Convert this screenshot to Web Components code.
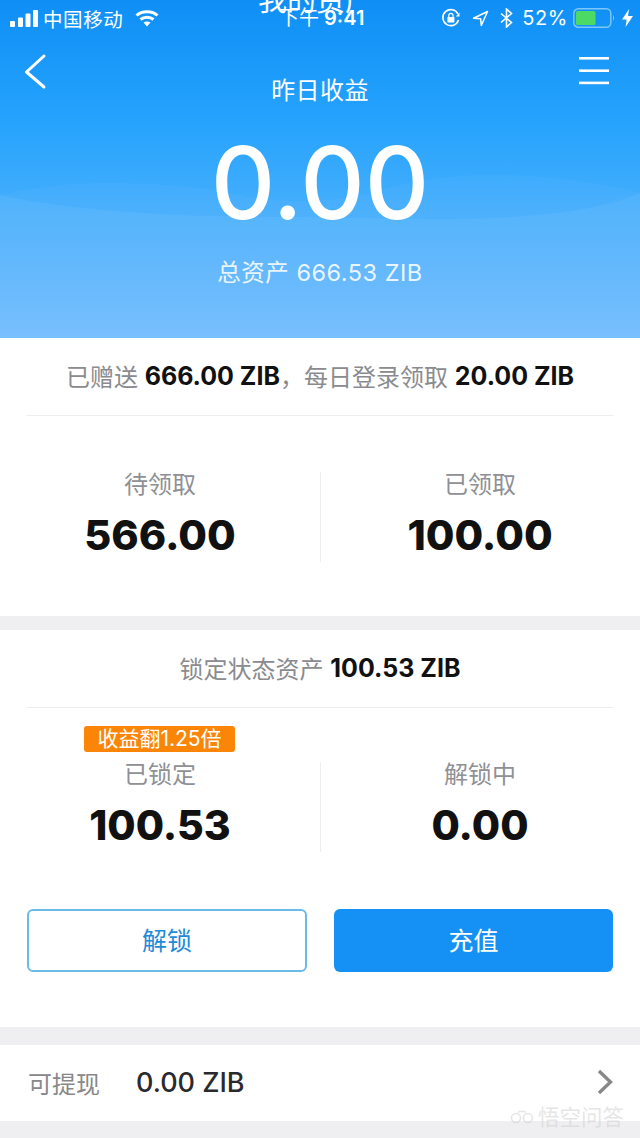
<!DOCTYPE html>
<html lang="zh">
<head>
<meta charset="utf-8">
<title>我的资产</title>
<style>
  html, body { margin: 0; padding: 0; background: #efeff1; }
  body { width: 640px; height: 1138px; overflow: hidden; font-family: Inter, "Noto Sans CJK SC", sans-serif; }
</style>
</head>
<body>
<asset-page>
  <asset-header></asset-header>
  <asset-card style="--card-height:278px">
    <gift-line><span>已赠送 </span><b>666.00 ZIB</b><span>，每日登录领取 </span><b>20.00 ZIB</b></gift-line>
    <stat-pair>
      <stat-cell slot="left" label="待领取" value="566.00" big></stat-cell>
      <stat-cell slot="right" label="已领取" value="100.00" big></stat-cell>
    </stat-pair>
  </asset-card>
  <asset-card style="--card-height:397px;--card-top:14px">
    <gift-line small><span>锁定状态资产 </span><b>100.53 ZIB</b></gift-line>
    <stat-pair small>
      <stat-cell slot="left" label="已锁定" value="100.53" badge="收益翻1.25倍"></stat-cell>
      <stat-cell slot="right" label="解锁中" value="0.00"></stat-cell>
    </stat-pair>
    <action-buttons></action-buttons>
  </asset-card>
  <withdraw-row></withdraw-row>
</asset-page>

<script>
class AssetPage extends HTMLElement {
  connectedCallback() {
    this.attachShadow({ mode: 'open' });
    this.shadowRoot.innerHTML = `
      <style>
        :host { display: flex; flex-direction: column; width: 640px; height: 1138px; overflow: hidden; position: relative; }
      </style>
      <slot></slot>
    `;
  }
}

class AssetHeader extends HTMLElement {
  connectedCallback() {
    this.attachShadow({ mode: 'open' });
    this.shadowRoot.innerHTML = `
      <style>
        :host {
          display: flex; flex-direction: column; align-items: center;
          height: 338px; flex: none; position: relative; overflow: hidden; color: #fff;
          background: linear-gradient(180deg, #0f8ff6 0%, #25a3fd 36%, #45aefc 62%, #6cbafd 100%);
          font-family: Inter, "Noto Sans CJK SC", sans-serif;
        }
        .waves { position: absolute; left: 0; top: 0; width: 640px; height: 338px; }
        .status {
          position: relative; width: 100%; height: 36px; flex: none; display: flex; align-items: center;
          font-size: 20px; padding: 0 7px 0 10px; box-sizing: border-box;
        }
        .status .left, .status .right { display: flex; align-items: center; }
        .status .left { gap: 6px; }
        .status .right { margin-left: auto; }
        .carrier { font-size: 19.5px; letter-spacing: 0.6px; margin: 0 6px 0 -1px; }
        .clock { position: absolute; left: 279px; top: 4px; font-size: 20px; line-height: 28px; font-weight: 600; white-space: nowrap; }
        .clock small { font-size: 20px; font-weight: 400; }
        .over-title { position: absolute; left: 258px; top: -15px; font-size: 29px; line-height: 32px; white-space: nowrap; }
        .pct { font-size: 20px; margin: 0 5px 0 9px; letter-spacing: .6px; }
        .nav { position: relative; width: 100%; height: 0; }
        .back { position: absolute; left: 24px; top: 17px; }
        .menu { position: absolute; left: 579px; top: 21px; }
        .caption { position: relative; margin-top: 38px; font-size: 24px; line-height: 34px; letter-spacing: .4px; }
        .amount { position: relative; margin-top: 23px; font-size: 100px; line-height: 104px; font-weight: 500; }
        .total { position: relative; margin-top: 22px; font-size: 23.5px; line-height: 32px; opacity: .86; letter-spacing: .5px; }
      </style>
      <svg class="waves" viewBox="0 0 640 338">
        <path d="M0 195C40 187 70 183 105 183C140 183 180 185 215 190C270 204 330 206 388 188C420 180 450 175 490 175C550 175 600 183 640 193V338H0Z" fill="#fff" opacity=".035"/>
        <path d="M0 195C60 208 150 217 285 217C370 217 440 222 510 217C570 214 610 205 640 193V338H0Z" fill="#fff" opacity=".05"/>
      </svg>
      <div class="status">
        <div class="left">
          <svg width="28" height="17" viewBox="0 0 28 17" fill="#fff">
            <rect x="0" y="11" width="5" height="6" rx="1"/><rect x="8" y="7.5" width="5" height="9.5" rx="1"/>
            <rect x="15.5" y="3.5" width="5" height="13.5" rx="1"/><rect x="23" y="0" width="5" height="17" rx="1"/>
          </svg>
          <span class="carrier">中国移动</span>
          <svg width="24" height="18" viewBox="0 0 24 18" fill="none" stroke="#fff" stroke-width="3">
            <path d="M1.5 6.5C7 1.5 17 1.5 22.5 6.5"/><path d="M5.5 10.5C9 7.5 15 7.5 18.5 10.5"/>
            <path d="M12 17.5L8.5 13.6C10.5 12.2 13.5 12.2 15.5 13.6Z" fill="#fff" stroke="none"/>
          </svg>
        </div>
        <span class="over-title">我的资产</span>
        <span class="clock"><small>下午</small> 9:41</span>
        <div class="right">
          <svg width="20" height="20" viewBox="0 0 20 20" fill="none" stroke="#fff" stroke-width="1.6">
            <path d="M17.5 12A8 8 0 1 1 17 6"/><path d="M18.5 4.5V8.5H14.8" fill="#fff" stroke="none"/>
            <rect x="6.4" y="9" width="7" height="5.4" fill="#fff" stroke="none" rx=".6"/>
            <path d="M7.8 9V7.4a2.1 2.1 0 0 1 4.2 0V9" stroke-width="1.2"/>
          </svg>
          <svg style="margin-left:11px" width="17" height="17" viewBox="0 0 17 17" fill="none" stroke="#fff" stroke-width="1.5" stroke-linejoin="round">
            <path d="M15.5 1.5L1.5 8.2L8.6 8.8L9.3 15.5Z"/>
          </svg>
          <svg style="margin-left:11px" width="13" height="20" viewBox="0 0 13 20" fill="none" stroke="#fff" stroke-width="1.6">
            <path d="M1 5.5L11.5 14.5L6.5 19V1L11.5 5.5L1 14.5"/>
          </svg>
          <span class="pct">52%</span>
          <svg width="42" height="20" viewBox="0 0 42 20">
            <rect x=".8" y=".8" width="37" height="18.4" rx="4.5" fill="none" stroke="#7cc6f8" stroke-width="1.5"/>
            <rect x="3" y="3" width="19.5" height="14" rx="1.5" fill="#4cd964"/>
            <path d="M40 7.5C41.5 8 41.5 12 40 12.5Z" fill="#7cc6f8"/>
          </svg>
          <svg style="margin-left:7px" width="11" height="18" viewBox="0 0 11 18" fill="#fff">
            <path d="M7 0L0 10.5H4.6L3.6 18L11 7H6Z"/>
          </svg>
        </div>
      </div>
      <div class="nav">
        <svg class="back" width="24" height="38" viewBox="0 0 24 38" fill="none" stroke="#fff" stroke-width="3" stroke-linecap="round" stroke-linejoin="round">
          <path d="M20 3L2.5 19L20 34"/>
        </svg>
        <svg class="menu" width="30" height="28" viewBox="0 0 30 28" fill="#fff">
          <rect x="0" y="0" width="30" height="2.6"/><rect x="0" y="12.4" width="30" height="2.6"/><rect x="0" y="24.6" width="30" height="2.6"/>
        </svg>
      </div>
      <div class="caption">昨日收益</div>
      <div class="amount">0.00</div>
      <div class="total">总资产 666.53 ZIB</div>
    `;
  }
}

class AssetCard extends HTMLElement {
  connectedCallback() {
    this.attachShadow({ mode: 'open' });
    this.shadowRoot.innerHTML = `
      <style>
        :host {
          display: flex; flex-direction: column; flex: none; background: #fff;
          height: var(--card-height); margin-top: var(--card-top, 0);
          padding: 0 27px; box-sizing: border-box;
        }
      </style>
      <slot></slot>
    `;
  }
}

class GiftLine extends HTMLElement {
  connectedCallback() {
    this.attachShadow({ mode: 'open' });
    this.shadowRoot.innerHTML = `
      <style>
        :host {
          display: flex; justify-content: center; align-items: center; flex: none;
          height: 78px; border-bottom: 1px solid #eeeeef; padding-bottom: 2px; box-sizing: border-box;
          font-size: 24px; color: #8a8b8f; white-space: pre;
        }
        ::slotted(b) { color: #111; font-weight: 700; font-size: 25px; }
      </style>
      <slot></slot>
    `;
  }
}

class StatPair extends HTMLElement {
  connectedCallback() {
    this.attachShadow({ mode: 'open' });
    this.shadowRoot.innerHTML = `
      <style>
        :host { display: grid; grid-template-columns: 320px 320px; margin: 56px -27px 0; height: 90px; flex: none; }
        :host([small]) { margin-top: 54px; }
        .col:first-child { padding-right: 3px; }
        .col + .col { border-left: 1px solid #eeeeef; padding-right: 1px; }
      </style>
      <div class="col"><slot name="left"></slot></div>
      <div class="col"><slot name="right"></slot></div>
    `;
  }
}

class StatCell extends HTMLElement {
  connectedCallback() {
    const big = this.hasAttribute('big');
    const badge = this.getAttribute('badge');
    this.attachShadow({ mode: 'open' });
    this.shadowRoot.innerHTML = `
      <style>
        :host { display: flex; flex-direction: column; align-items: center; position: relative; height: 90px; }
        .label { font-size: 24px; line-height: 28px; color: #8e9095; margin-top: -1px; }
        .value { font-weight: 800; color: #111; font-size: ${big ? 41.5 : 41}px; line-height: 48px; margin-top: 12px; }
        .badge {
          position: absolute; left: 84px; top: -36px; width: 151px; height: 26px; box-sizing: border-box;
          background: #fb8506; color: #fff; border-radius: 3px; font-size: 21px; line-height: 26px; text-align: center; white-space: nowrap;
        }
      </style>
      ${badge ? `<span class="badge">${badge}</span>` : ''}
      <span class="label">${this.getAttribute('label')}</span>
      <span class="value">${this.getAttribute('value')}</span>
    `;
  }
}

class ActionButtons extends HTMLElement {
  connectedCallback() {
    this.attachShadow({ mode: 'open' });
    this.shadowRoot.innerHTML = `
      <style>
        :host { display: grid; grid-template-columns: 280px 279px; gap: 27px; margin-top: 57px; flex: none; }
        button {
          height: 63px; border-radius: 6px; font: 25px Inter, "Noto Sans CJK SC", sans-serif; padding: 0 0 3px; box-sizing: border-box;
        }
        .ghost { background: #fff; border: 2px solid #6bbbe8; color: #1f8bd8; }
        .solid { background: #1590f5; border: 0; color: #fff; }
      </style>
      <button class="ghost">解锁</button>
      <button class="solid">充值</button>
    `;
  }
}

class WithdrawRow extends HTMLElement {
  connectedCallback() {
    this.attachShadow({ mode: 'open' });
    this.shadowRoot.innerHTML = `
      <style>
        :host {
          display: flex; align-items: center; flex: none; position: relative; background: #fff;
          height: 76px; margin-top: 18px; padding: 0 27px 0 28px; box-sizing: border-box;
        }
        .label { font-size: 24px; color: #88888a; width: 108px; margin-top: -2px; }
        .value { font-size: 27px; font-weight: 500; color: #2a2a2e; margin-top: -2px; }
        svg { margin-left: auto; margin-top: -2px; }
        .mark {
          position: absolute; left: 510px; top: 58px; display: flex; align-items: center; gap: 4px;
          color: rgba(205,205,205,.5); font-size: 21.5px; line-height: 28px; white-space: nowrap;
        }
      </style>
      <span class="label">可提现</span>
      <span class="value">0.00 ZIB</span>
      <svg width="16" height="26" viewBox="0 0 16 26" fill="none" stroke="#88888a" stroke-width="3.4">
        <path d="M2 2L13.5 13L2 24"/>
      </svg>
      <span class="mark">
        <svg width="24" height="14" viewBox="0 0 24 14" fill="none" stroke="currentColor" stroke-width="1.6" style="margin:0">
          <circle cx="6" cy="8" r="4.5"/><circle cx="18" cy="8" r="4.5"/><path d="M8 2.5C10 .8 14 .8 16 2.5"/>
        </svg>
        悟空问答
      </span>
    `;
  }
}

customElements.define('asset-page', AssetPage);
customElements.define('asset-header', AssetHeader);
customElements.define('asset-card', AssetCard);
customElements.define('gift-line', GiftLine);
customElements.define('stat-pair', StatPair);
customElements.define('stat-cell', StatCell);
customElements.define('action-buttons', ActionButtons);
customElements.define('withdraw-row', WithdrawRow);
</script>
</body>
</html>
